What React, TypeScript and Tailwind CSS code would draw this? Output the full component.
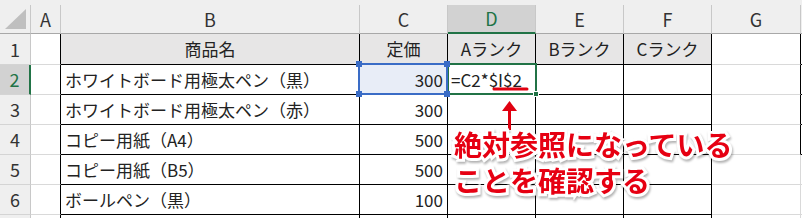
import React from 'react'

const rows = [
  { n: 1, b: '商品名', c: '定価', d: 'Aランク', e: 'Bランク', f: 'Cランク' },
  { n: 2, b: 'ホワイトボード用極太ペン（黒）', c: '300', d: '=C2*$I$2' },
  { n: 3, b: 'ホワイトボード用極太ペン（赤）', c: '300' },
  { n: 4, b: 'コピー用紙（A4）', c: '500' },
  { n: 5, b: 'コピー用紙（B5）', c: '500' },
  { n: 6, b: 'ボールペン（黒）', c: '100' },
  { n: 7, b: '', c: '' },
]

const cols = ['A', 'B', 'C', 'D', 'E', 'F', 'G']

export default function App() {
  return (
    <div className="relative w-[802px] h-[218px] overflow-hidden bg-white font-['Noto_Sans_CJK_JP',sans-serif] text-[#222]">
      <div className="grid grid-cols-[31px_30px_299px_88px_88px_88px_88px_89px_1fr] grid-rows-[5px_29px_31px_30px_30px_30px_30px_30px_30px]">
        {/* top strip */}
        <div className="col-span-9 bg-[#efefef]"></div>

        {/* column headers */}
        <div className="relative bg-[#efefef] border-r border-b border-r-[#c8c8c8] border-b-[#a8a8a8]">
          <svg className="absolute left-0 top-0" width="30" height="28">
            <polygon points="5,24 26,24 26,4" fill="#bfbfbf" />
          </svg>
        </div>
        {cols.map((c) =>
          c === 'D' ? (
            <div
              key={c}
              className="flex items-center justify-center bg-[#d2d2d2] text-[#217346] text-[18px] border-r border-b-2 border-r-[#c8c8c8] border-b-[#217346]"
            >
              {c}
            </div>
          ) : (
            <div
              key={c}
              className="flex items-center justify-center bg-[#efefef] text-[#333] text-[18px] border-r border-b border-r-[#c8c8c8] border-b-[#a8a8a8]"
            >
              {c}
            </div>
          )
        )}
        <div className="bg-[#efefef] border-b border-b-[#a8a8a8]"></div>

        {rows.map((r) => {
          const head = r.n === 1
          const active = r.n === 2
          const boxed = r.n <= 4
          return (
            <React.Fragment key={r.n}>
              {active ? (
                <div className="flex items-center justify-center bg-[#d2d2d2] text-[#217346] text-[18px] border-r-2 border-b border-r-[#217346] border-b-[#d4d4d4]">
                  {r.n}
                </div>
              ) : (
                <div className="flex items-center justify-center bg-[#efefef] text-[#333] text-[18px] border-r border-b border-r-[#c8c8c8] border-b-[#d4d4d4]">
                  {r.n}
                </div>
              )}
              {/* A */}
              <div className="border-r border-b border-r-black border-b-[#d9d9d9]"></div>
              {/* B */}
              <div
                className={
                  head
                    ? 'flex items-center justify-center bg-[#e7e6e6] text-[17px] border-r border-b border-black'
                    : 'flex items-center pl-[4px] text-[17px] whitespace-nowrap border-r border-b border-black'
                }
              >
                {r.b}
              </div>
              {/* C */}
              {head ? (
                <div className="flex items-center justify-center bg-[#e7e6e6] text-[17px] border-r border-b border-black">
                  {r.c}
                </div>
              ) : active ? (
                <div className="relative flex items-center justify-end pr-[4px] bg-[#e8edf7] text-[17px] border-r border-b border-black">
                  {r.c}
                  <div className="absolute -left-[2px] -top-[2px] -right-[1px] -bottom-[1px] border-2 border-[#3a6cc6] z-20">
                    <div className="absolute -left-[4px] -top-[4px] w-[6px] h-[6px] bg-[#3a6cc6]"></div>
                    <div className="absolute -right-[4px] -top-[4px] w-[6px] h-[6px] bg-[#3a6cc6]"></div>
                    <div className="absolute -left-[4px] -bottom-[4px] w-[6px] h-[6px] bg-[#3a6cc6]"></div>
                    <div className="absolute -right-[4px] -bottom-[4px] w-[6px] h-[6px] bg-[#3a6cc6]"></div>
                  </div>
                </div>
              ) : (
                <div className="flex items-center justify-end pr-[4px] text-[17px] border-r border-b border-black">
                  {r.c}
                </div>
              )}
              {/* D */}
              {head ? (
                <div className="flex items-center justify-center bg-[#e7e6e6] text-[17px] border-r border-b border-black">
                  {r.d}
                </div>
              ) : active ? (
                <div className="relative flex items-center pl-[3px] text-[17px] whitespace-nowrap border-r border-b border-black">
                  {r.d}
                  <div className="absolute -left-[1px] -top-[2px] -right-[2px] -bottom-[1px] border-2 border-[#217346] z-10">
                    <div className="absolute -right-[4px] -bottom-[4px] w-[6px] h-[6px] bg-[#217346] border border-white"></div>
                  </div>
                </div>
              ) : (
                <div className="border-r border-b border-black"></div>
              )}
              {/* E */}
              <div
                className={
                  head
                    ? 'flex items-center justify-center bg-[#e7e6e6] text-[17px] border-r border-b border-black'
                    : 'border-r border-b border-black'
                }
              >
                {r.e}
              </div>
              {/* F */}
              <div
                className={
                  head
                    ? 'flex items-center justify-center bg-[#e7e6e6] text-[17px] border-r border-b border-black'
                    : 'border-r border-b border-black'
                }
              >
                {r.f}
              </div>
              {/* G */}
              <div
                className={
                  boxed
                    ? 'border-r border-b border-r-black border-b-[#d9d9d9]'
                    : 'border-r border-b border-r-[#d9d9d9] border-b-[#d9d9d9]'
                }
              ></div>
              {/* H */}
              <div
                className={boxed ? 'border-b border-b-black' : 'border-b border-b-[#d9d9d9]'}
              ></div>
            </React.Fragment>
          )
        })}
      </div>

      {/* underline and arrow */}
      <svg className="absolute left-0 top-0 pointer-events-none z-30" width="802" height="218">
        <line x1="494" y1="89" x2="527" y2="89" stroke="#e00010" strokeWidth="3" strokeLinecap="round" />
        <rect x="508" y="108" width="3" height="22" fill="#e00010" />
        <polygon points="509.5,101 502,111 517,111" fill="#e00010" />
      </svg>

      {/* annotation */}
      <div className="absolute left-[454px] top-[126px] z-40 text-[28px] leading-[36px] font-bold text-[#e60012] whitespace-nowrap [-webkit-text-stroke:6px_white] [paint-order:stroke_fill] drop-shadow-[1px_2px_1px_rgba(0,0,0,0.3)]">
        <div>絶対参照になっている</div>
        <div>ことを確認する</div>
      </div>
    </div>
  )
}
